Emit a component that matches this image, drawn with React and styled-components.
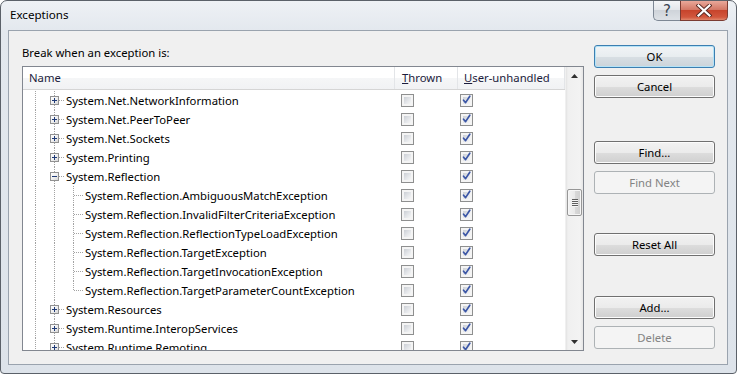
import React from 'react';
import styled, { createGlobalStyle, css } from 'styled-components';

const GlobalStyle = createGlobalStyle`
  html, body {
    margin: 0;
    padding: 0;
    background: #ffffff;
  }
  body {
    font-family: 'Segoe UI', 'Noto Sans', 'Open Sans', sans-serif;
    font-size: 11.3px;
    color: #000;
  }
`;

const dotsV = 'repeating-linear-gradient(to bottom, #a3a3a3 0 1px, transparent 1px 2px)';
const dotsH = 'repeating-linear-gradient(to right, #a3a3a3 0 1px, transparent 1px 2px)';

const StyledWindow = styled.div`
  box-sizing: border-box;
  width: 737px;
  height: 374px;
  display: flex;
  flex-direction: column;
  border: 1px solid #5b6169;
  border-radius: 7px 7px 4px 4px;
  background: linear-gradient(to bottom, #eef1f5 0, #e3e8ee 30px, #dde3ea 100%);
  overflow: hidden;
`;

const TitleBar = styled.div`
  height: 29px;
  flex: none;
  display: flex;
  justify-content: space-between;
  align-items: flex-start;
  padding: 0 8px 0 9px;
`;

const Title = styled.div`
  padding-top: 6px;
  font-size: 11.6px;
  color: #000;
`;

const CaptionButtons = styled.div`
  display: flex;
`;

const CaptionButton = styled.div`
  box-sizing: border-box;
  height: 20px;
  width: ${({ $wide }) => ($wide ? '48px' : '27px')};
  display: flex;
  align-items: center;
  justify-content: center;
  border: 1px solid ${({ $close }) => ($close ? '#7b3b32' : '#7d8794')};
  border-top: none;
  ${({ $close }) =>
    $close
      ? css`
          border-radius: 0 0 5px 0;
          background: linear-gradient(to bottom, #e9a89a 0, #d47866 45%, #c7442c 50%, #d2573d 85%, #e0876c 100%);
        `
      : css`
          border-radius: 0 0 0 5px;
          border-right: none;
          background: linear-gradient(to bottom, #f4f5f7 0, #e4e7eb 45%, #cfd4da 50%, #dde1e6 100%);
          color: #3b4350;
          font-size: 15px;
          font-family: 'DejaVu Sans', sans-serif;
        `}
`;

const Client = styled.div`
  flex: 1;
  margin: 0 8px 8px 7px;
  border: 1px solid #9aa3ae;
  background: #f0f0f0;
  display: grid;
  grid-template-columns: 562px 121px;
  column-gap: 10px;
  padding: 14px 12px 0 13px;
`;

const LeftPane = styled.div`
  display: flex;
  flex-direction: column;
`;

const Label = styled.div`
  height: 16px;
  line-height: 16px;
  margin-bottom: 5px;
`;

const ListBox = styled.div`
  box-sizing: border-box;
  height: 285px;
  border: 1px solid #828790;
  background: #fff;
  display: flex;
`;

const ListMain = styled.div`
  flex: 1;
  display: flex;
  flex-direction: column;
  overflow: hidden;
`;

const Header = styled.div`
  height: 22px;
  flex: none;
  display: flex;
  border-bottom: 1px solid #d5d5d5;
  background: linear-gradient(to bottom, #ffffff 0, #ffffff 50%, #f5f6f7 51%, #f1f2f4 100%);
  color: #1c1c3c;
`;

const HeaderCell = styled.div`
  box-sizing: border-box;
  width: ${({ $w }) => $w}px;
  flex: none;
  padding-left: ${({ $pad }) => $pad}px;
  line-height: 22px;
  border-right: 1px solid #e3e5e8;
  &:last-child {
    flex: 1;
    border-right: none;
  }
`;

const Rows = styled.div`
  padding-top: 1px;
`;

const RowLine = styled.div`
  height: 19px;
  display: flex;
  align-items: stretch;
`;

const NameCell = styled.div`
  width: 372px;
  flex: none;
  display: flex;
  padding-left: 3px;
  box-sizing: border-box;
  white-space: nowrap;
`;

const Guide = styled.span`
  position: relative;
  width: 19px;
  flex: none;

  &::before {
    content: '';
    position: absolute;
    left: 9px;
    top: 0;
    width: 1px;
    height: ${({ $v }) => ($v === 'full' ? '19px' : $v === 'top' ? '10px' : '0')};
    background: ${dotsV};
  }

  &::after {
    content: '';
    display: ${({ $h }) => ($h ? 'block' : 'none')};
    position: absolute;
    left: 10px;
    top: 9px;
    width: 9px;
    height: 1px;
    background: ${dotsH};
  }
`;

const Expander = styled.span`
  position: absolute;
  left: 5px;
  top: 5px;
  width: 9px;
  height: 9px;
  box-sizing: border-box;
  border: 1px solid #919191;
  background: linear-gradient(135deg, #ffffff 0, #f0f0f0 50%, #d8d8d8 100%);
  z-index: 1;

  &::before,
  &::after {
    content: '';
    position: absolute;
    background: #1f3a76;
  }
  &::before {
    left: 1px;
    top: 3px;
    width: 5px;
    height: 1px;
  }
  &::after {
    display: ${({ $open }) => ($open ? 'none' : 'block')};
    left: 3px;
    top: 1px;
    width: 1px;
    height: 5px;
  }
`;

const ItemText = styled.span`
  padding-left: 2px;
  line-height: 19px;
`;

const CheckCell = styled.div`
  width: ${({ $w }) => $w}px;
  flex: none;
  display: flex;
  align-items: center;
  padding-left: ${({ $pad }) => $pad}px;
  box-sizing: border-box;
`;

const CheckBox = styled.span`
  width: 13px;
  height: 13px;
  box-sizing: border-box;
  border: 1px solid #8e8f8f;
  background: #f4f4f4;
  padding: 2px;
  margin-top: -1px;
  display: block;

  > span {
    display: block;
    width: 7px;
    height: 7px;
    background: linear-gradient(135deg, #cbcfd5 0, #e6e8eb 60%, #f6f6f6 100%);
    position: relative;
  }

  svg {
    position: absolute;
    left: -1px;
    top: -2px;
  }
`;

const ScrollBar = styled.div`
  width: 17px;
  flex: none;
  display: flex;
  flex-direction: column;
  background: linear-gradient(to right, #e3e3e3 0, #f0f0f0 2px, #f3f3f3 14px, #e6e6e6 100%);
  border-left: 1px solid #f0f0f0;
`;

const ScrollArrow = styled.div`
  height: 17px;
  flex: none;
  display: flex;
  align-items: center;
  justify-content: center;
`;

const Track = styled.div`
  flex: 1;
  display: flex;
  flex-direction: column;
  align-items: center;
`;

const Thumb = styled.div`
  width: 15px;
  height: 27px;
  box-sizing: border-box;
  border: 1px solid #979797;
  border-radius: 2px;
  background: linear-gradient(to right, #f3f3f3 0, #e9e9e9 50%, #d9d9d9 51%, #cfcfcf 100%);
  box-shadow: inset 0 0 0 1px #f6f6f6;
  display: flex;
  flex-direction: column;
  align-items: center;
  justify-content: center;
  gap: 1px;

  span {
    display: block;
    width: 6px;
    height: 1px;
    background: #5e5e5e;
    box-shadow: 0 1px 0 #f4f4f4;
  }
`;

const ButtonColumn = styled.div`
  display: flex;
  flex-direction: column;
`;

const Button = styled.div`
  box-sizing: border-box;
  height: 23px;
  margin-top: ${({ $gap }) => $gap}px;
  display: flex;
  align-items: center;
  justify-content: center;
  border-radius: 3px;
  border: 1px solid #707070;
  background: linear-gradient(to bottom, #f2f2f2 0, #ebebeb 50%, #dddddd 51%, #cfcfcf 100%);
  box-shadow: inset 0 0 0 1px #fcfcfc;
  color: #000;

  ${({ $default }) =>
    $default &&
    css`
      border-color: #3c7fb1;
      box-shadow: inset 0 0 0 1px #b5e3f7;
      background: linear-gradient(to bottom, #f1f4f6 0, #e8edf0 50%, #d8dfe4 51%, #ccd4da 100%);
    `}

  ${({ $disabled }) =>
    $disabled &&
    css`
      border-color: #adb2b5;
      background: #f4f4f4;
      box-shadow: none;
      color: #838383;
    `}
`;

const tree = [
  { level: 1, text: 'System.Net.NetworkInformation', exp: 'closed' },
  { level: 1, text: 'System.Net.PeerToPeer', exp: 'closed' },
  { level: 1, text: 'System.Net.Sockets', exp: 'closed' },
  { level: 1, text: 'System.Printing', exp: 'closed' },
  { level: 1, text: 'System.Reflection', exp: 'open' },
  { level: 2, text: 'System.Reflection.AmbiguousMatchException' },
  { level: 2, text: 'System.Reflection.InvalidFilterCriteriaException' },
  { level: 2, text: 'System.Reflection.ReflectionTypeLoadException' },
  { level: 2, text: 'System.Reflection.TargetException' },
  { level: 2, text: 'System.Reflection.TargetInvocationException' },
  { level: 2, text: 'System.Reflection.TargetParameterCountException', last: true },
  { level: 1, text: 'System.Resources', exp: 'closed' },
  { level: 1, text: 'System.Runtime.InteropServices', exp: 'closed' },
  { level: 1, text: 'System.Runtime.Remoting', exp: 'closed' },
];

const Check = () => (
  <svg width="9" height="10" viewBox="0 0 9 10">
    <path d="M1.5 5.2 L3.6 7.6 L7.8 1.2" fill="none" stroke="#3b56a6" strokeWidth="1.7" strokeLinecap="round" strokeLinejoin="round" />
  </svg>
);

const Row = ({ item }) => (
  <RowLine>
    <NameCell>
      <Guide $v="full" />
      {item.level === 1 ? (
        <Guide $v="full" $h>
          <Expander $open={item.exp === 'open'} />
        </Guide>
      ) : (
        <>
          <Guide $v="full" />
          <Guide $v={item.last ? 'top' : 'full'} $h />
        </>
      )}
      <ItemText>{item.text}</ItemText>
    </NameCell>
    <CheckCell $w={63} $pad={6}>
      <CheckBox>
        <span />
      </CheckBox>
    </CheckCell>
    <CheckCell $w={107} $pad={2}>
      <CheckBox>
        <span>
          <Check />
        </span>
      </CheckBox>
    </CheckCell>
  </RowLine>
);

const App = () => {
  const scrollFraction = 0.42;

  return (
    <>
      <GlobalStyle />
      <StyledWindow>
        <TitleBar>
          <Title>Exceptions</Title>
          <CaptionButtons>
            <CaptionButton>?</CaptionButton>
            <CaptionButton $close $wide>
              <svg width="16" height="13" viewBox="0 0 16 13">
                <path d="M2.5 1.5 L13.5 11.5 M13.5 1.5 L2.5 11.5" stroke="#5a2a24" strokeWidth="4" strokeLinecap="square" />
                <path d="M2.5 1.5 L13.5 11.5 M13.5 1.5 L2.5 11.5" stroke="#ffffff" strokeWidth="2.2" strokeLinecap="square" />
              </svg>
            </CaptionButton>
          </CaptionButtons>
        </TitleBar>

        <Client>
          <LeftPane>
            <Label>Break when an exception is:</Label>
            <ListBox>
              <ListMain>
                <Header>
                  <HeaderCell $w={372} $pad={6}>Name</HeaderCell>
                  <HeaderCell $w={63} $pad={7}>
                    <u>T</u>hrown
                  </HeaderCell>
                  <HeaderCell $w={107} $pad={6}>
                    <u>U</u>ser-unhandled
                  </HeaderCell>
                  <HeaderCell />
                </Header>
                <Rows>
                  {tree.map((item) => (
                    <Row key={item.text} item={item} />
                  ))}
                </Rows>
              </ListMain>
              <ScrollBar>
                <ScrollArrow>
                  <svg width="7" height="4" viewBox="0 0 7 4">
                    <path d="M0 4 L3.5 0 L7 4 Z" fill="#303030" />
                  </svg>
                </ScrollArrow>
                <Track>
                  <Thumb style={{ marginTop: `${Math.round(scrollFraction * 249)}px` }}>
                    <span />
                    <span />
                    <span />
                    <span />
                  </Thumb>
                </Track>
                <ScrollArrow>
                  <svg width="7" height="4" viewBox="0 0 7 4">
                    <path d="M0 0 L7 0 L3.5 4 Z" fill="#303030" />
                  </svg>
                </ScrollArrow>
              </ScrollBar>
            </ListBox>
          </LeftPane>

          <ButtonColumn>
            <Button $default $gap={0}>OK</Button>
            <Button $gap={7}>Cancel</Button>
            <Button $gap={43}>Find...</Button>
            <Button $disabled $gap={7}>Find Next</Button>
            <Button $gap={39}>Reset All</Button>
            <Button $gap={40}>Add...</Button>
            <Button $disabled $gap={7}>Delete</Button>
          </ButtonColumn>
        </Client>
      </StyledWindow>
    </>
  );
};

export default App;
